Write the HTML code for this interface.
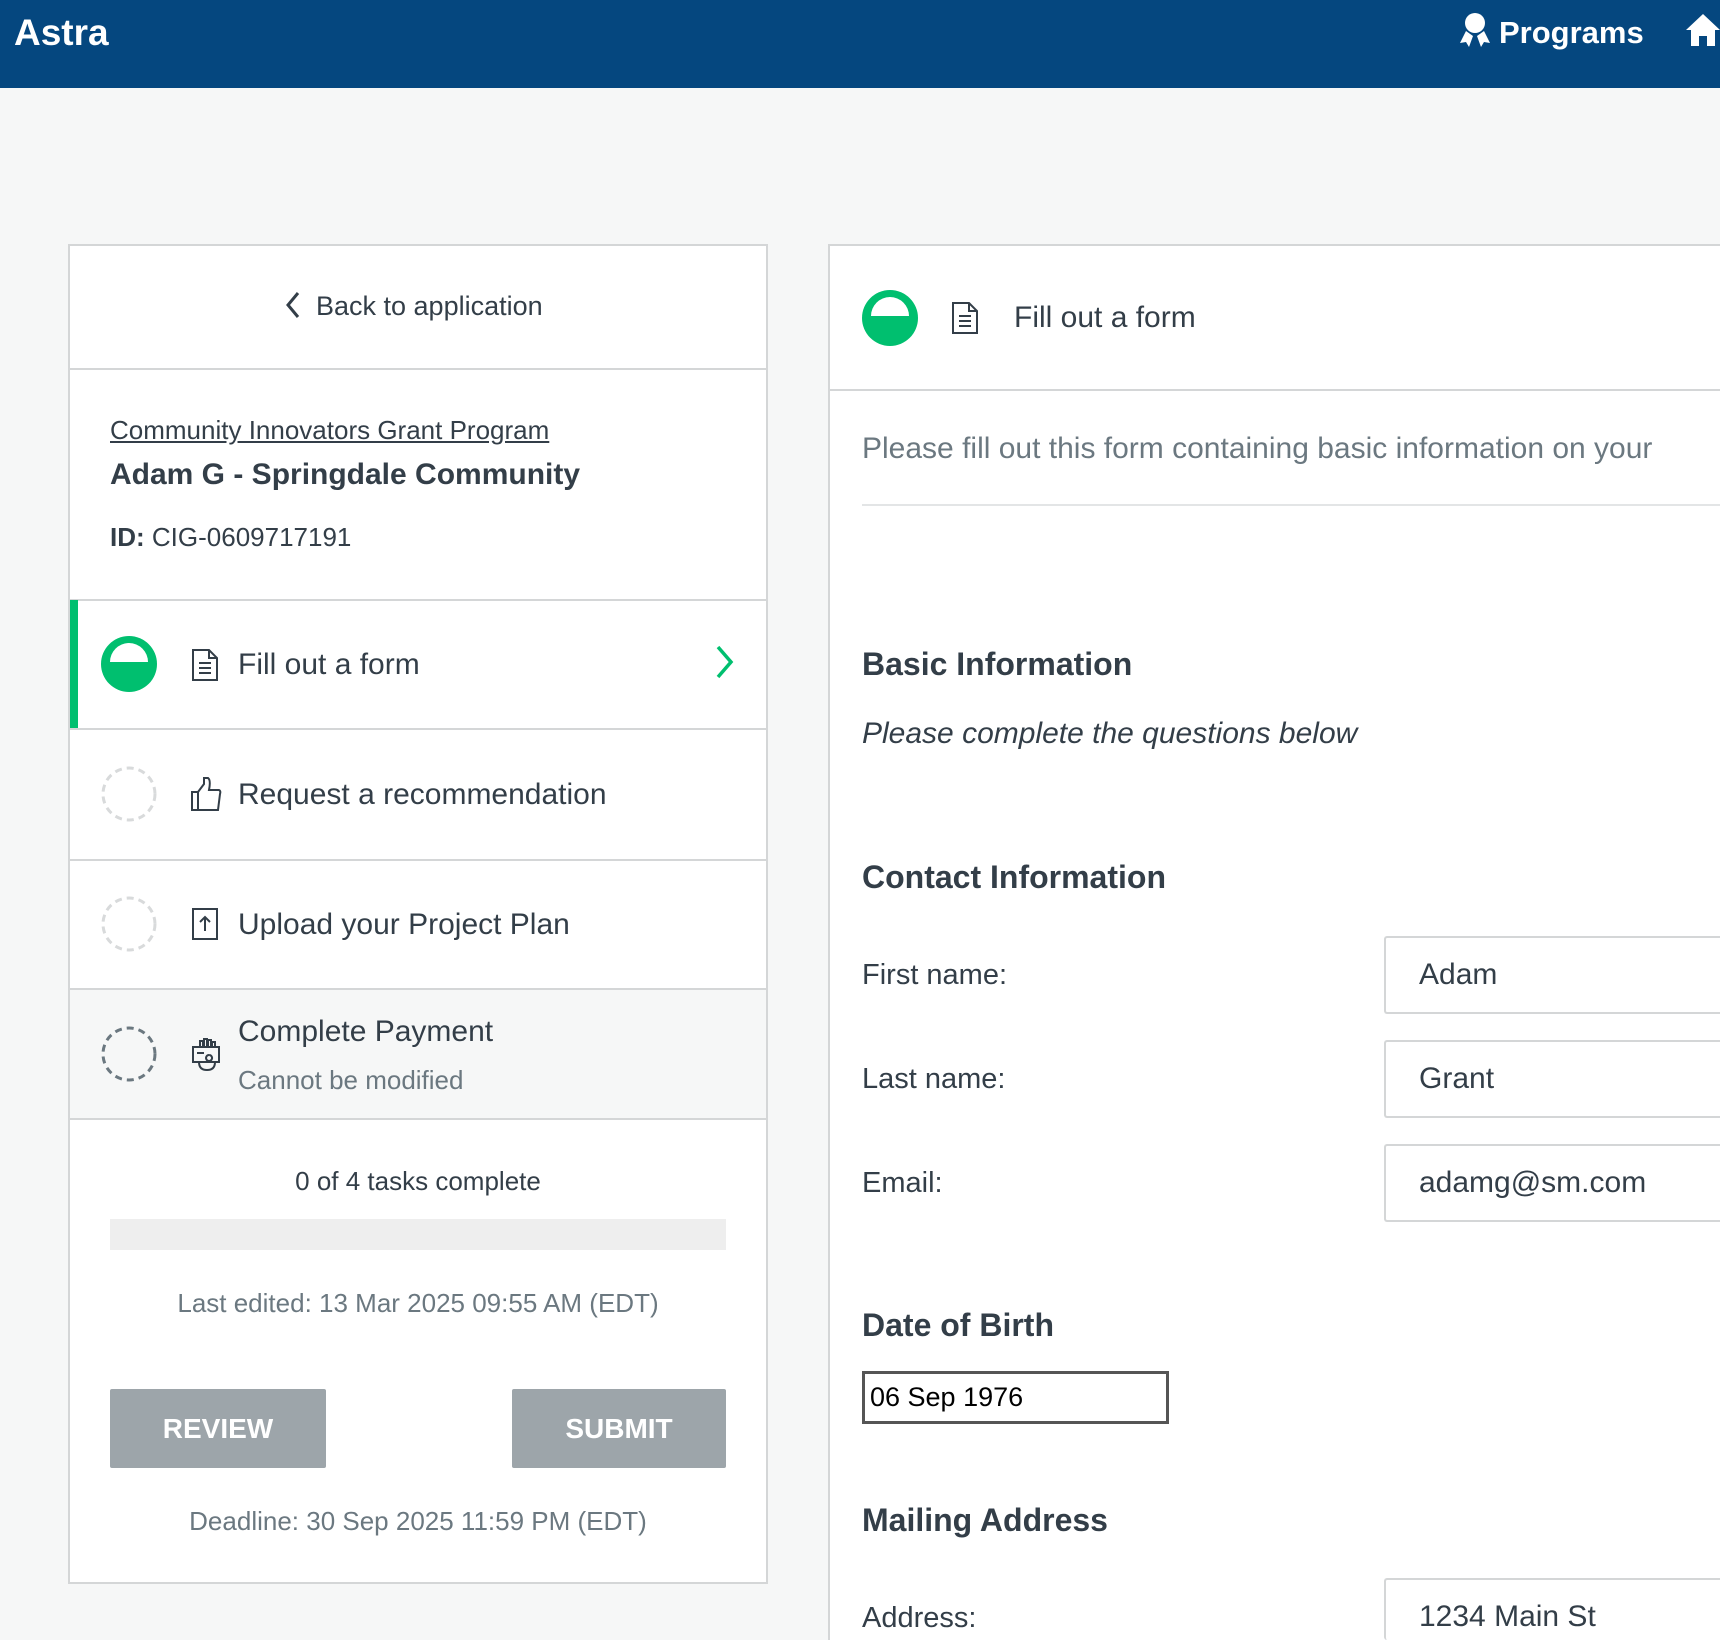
<!DOCTYPE html>
<html><head><meta charset="utf-8">
<style>
*{margin:0;padding:0;box-sizing:border-box}
html,body{width:1720px;height:1640px;overflow:hidden;background:#f6f7f7;font-family:"Liberation Sans",sans-serif;color:#333e48}
#w{position:relative;width:1720px;height:1640px;overflow:hidden}
.a{position:absolute;white-space:nowrap}
.hdr{position:absolute;left:0;top:0;width:1720px;height:88px;background:#05477f}
.panel{position:absolute;background:#fff;border:2px solid #d4d6d7}
.hl{position:absolute;height:2px;background:#d4d6d7}
.t{font-size:30px;line-height:36px}
.btn{position:absolute;background:#9da5aa;color:#fff;font-weight:bold;font-size:28px;text-align:center;line-height:79px;border-radius:2px}
.inp{position:absolute;left:1384px;width:340px;height:78px;border:2px solid #d4d6d7;border-right:none;border-radius:3px 0 0 3px;background:#fff;font-size:30px;line-height:74px;padding-left:33px;color:#333e48}
.lbl{font-size:29px;line-height:34px}
.h{font-size:32px;font-weight:bold;line-height:40px}
</style></head><body><div id="w">
<div class="hdr"></div>
<div class="a" style="left:14px;top:12px;font-size:37px;font-weight:bold;color:#fff;line-height:42px">Astra</div>
<svg class="a" style="left:1458px;top:12px" width="34" height="36" viewBox="0 0 34 36"><circle cx="17" cy="11" r="10" fill="#fff"/><path d="M8 19 L2 31 L8 30 L11 35 L15 24 Z M26 19 L32 31 L26 30 L23 35 L19 24 Z" fill="#fff"/></svg>
<div class="a" style="left:1499px;top:14px;font-size:31px;font-weight:bold;color:#fff;line-height:38px">Programs</div>
<svg class="a" style="left:1686px;top:12px" width="34" height="36" viewBox="0 0 34 36"><path d="M17 2 L34 18 L29 18 L29 34 L21 34 L21 24 L13 24 L13 34 L5 34 L5 18 L0 18 Z" fill="#fff"/></svg>

<div class="panel" style="left:68px;top:244px;width:700px;height:1340px"></div>
<svg class="a" style="left:284px;top:290px" width="18" height="30" viewBox="0 0 18 30"><path d="M14 3 L4 15 L14 27" fill="none" stroke="#333e48" stroke-width="3"/></svg>
<div class="a" style="left:316px;top:290px;font-size:27px;line-height:32px">Back to application</div>
<div class="hl" style="left:70px;top:368px;width:696px"></div>
<div class="a" style="left:110px;top:414px;font-size:26px;line-height:32px;text-decoration:underline">Community Innovators Grant Program</div>
<div class="a" style="left:110px;top:456px;font-size:30px;font-weight:bold;line-height:38px">Adam G - Springdale Community</div>
<div class="a" style="left:110px;top:521px;font-size:26px;line-height:32px"><b>ID:</b> CIG-0609717191</div>
<div class="hl" style="left:70px;top:599px;width:696px"></div>
<div class="a" style="left:70px;top:600px;width:8px;height:129px;background:#00bf6f"></div>
<svg class="a" style="left:101px;top:636px" width="56" height="56" viewBox="0 0 56 56"><circle cx="28" cy="28" r="28" fill="#00bf6f"/><path d="M9 26 A19 19 0 0 1 47 26 Z" fill="#fff"/></svg>
<svg class="a" style="left:191px;top:648px" width="28" height="34" viewBox="0 0 28 34"><path d="M2 2 H18 L26 10 V32 H2 Z M18 2 V10 H26 M8 15 H20 M8 20 H20 M8 25 H20" fill="none" stroke="#333e48" stroke-width="2"/></svg>
<div class="a t" style="left:238px;top:647px">Fill out a form</div>
<svg class="a" style="left:714px;top:644px" width="22" height="36" viewBox="0 0 22 36"><path d="M4 3 L17 18 L4 33" fill="none" stroke="#00bf6f" stroke-width="3.5"/></svg>
<div class="hl" style="left:70px;top:728px;width:696px"></div>
<svg class="a" style="left:101px;top:766px" width="56" height="56" viewBox="0 0 56 56"><circle cx="28" cy="28" r="26" fill="none" stroke="#d8dadb" stroke-width="3" stroke-dasharray="7 5"/></svg>
<svg class="a" style="left:190px;top:776px" width="32" height="36" viewBox="0 0 32 36"><path d="M2 16 H8 V34 H2 Z M8 16 L14 8 V2 H18 Q21 4 19 14 H29 Q31 15 30 18 L28 34 H8" fill="none" stroke="#333e48" stroke-width="2"/></svg>
<div class="a t" style="left:238px;top:777px">Request a recommendation</div>
<div class="hl" style="left:70px;top:859px;width:696px"></div>
<svg class="a" style="left:101px;top:896px" width="56" height="56" viewBox="0 0 56 56"><circle cx="28" cy="28" r="26" fill="none" stroke="#d8dadb" stroke-width="3" stroke-dasharray="7 5"/></svg>
<svg class="a" style="left:191px;top:907px" width="28" height="34" viewBox="0 0 28 34"><path d="M2 2 H26 V32 H2 Z M14 24 V10 M9 15 L14 10 L19 15" fill="none" stroke="#333e48" stroke-width="2"/></svg>
<div class="a t" style="left:238px;top:907px">Upload your Project Plan</div>
<div class="hl" style="left:70px;top:988px;width:696px"></div>
<div class="a" style="left:70px;top:990px;width:696px;height:128px;background:#f6f7f7"></div>
<svg class="a" style="left:101px;top:1026px" width="56" height="56" viewBox="0 0 56 56"><circle cx="28" cy="28" r="26" fill="none" stroke="#6b7880" stroke-width="3" stroke-dasharray="7 5"/></svg>
<svg class="a" style="left:190px;top:1036px" width="32" height="36" viewBox="0 0 32 36"><path d="M3 11 H29 V26 H3 Z M7 17 H14 M19 19 a3 3 0 1 0 0.1 0 M10 11 V5 H13 V11 M14 11 V3 H17 V11 M18 11 V4 H21 V11 M22 11 V6 H25 V11 M9 26 Q9 34 17 34 Q25 34 25 26" fill="none" stroke="#333e48" stroke-width="2"/></svg>
<div class="a t" style="left:238px;top:1014px">Complete Payment</div>
<div class="a" style="left:238px;top:1064px;font-size:26px;line-height:32px;color:#6b7880">Cannot be modified</div>
<div class="hl" style="left:70px;top:1118px;width:696px"></div>
<div class="a" style="left:70px;top:1165px;width:696px;text-align:center;font-size:26px;line-height:32px">0 of 4 tasks complete</div>
<div class="a" style="left:110px;top:1219px;width:616px;height:31px;background:#eeeeee"></div>
<div class="a" style="left:70px;top:1287px;width:696px;text-align:center;font-size:26px;line-height:32px;color:#6b7880">Last edited: 13 Mar 2025 09:55 AM (EDT)</div>
<div class="btn" style="left:110px;top:1389px;width:216px;height:79px">REVIEW</div>
<div class="btn" style="left:512px;top:1389px;width:214px;height:79px">SUBMIT</div>
<div class="a" style="left:70px;top:1505px;width:696px;text-align:center;font-size:26px;line-height:32px;color:#6b7880">Deadline: 30 Sep 2025 11:59 PM (EDT)</div>

<div class="panel" style="left:828px;top:244px;width:892px;height:1396px;border-right:none;border-bottom:none"></div>
<svg class="a" style="left:862px;top:290px" width="56" height="56" viewBox="0 0 56 56"><circle cx="28" cy="28" r="28" fill="#00bf6f"/><path d="M9 26 A19 19 0 0 1 47 26 Z" fill="#fff"/></svg>
<svg class="a" style="left:951px;top:301px" width="28" height="34" viewBox="0 0 28 34"><path d="M2 2 H18 L26 10 V32 H2 Z M18 2 V10 H26 M8 15 H20 M8 20 H20 M8 25 H20" fill="none" stroke="#333e48" stroke-width="2"/></svg>
<div class="a t" style="left:1014px;top:300px">Fill out a form</div>
<div class="hl" style="left:830px;top:389px;width:890px"></div>
<div class="a" style="left:862px;top:431px;font-size:30px;line-height:36px;color:#6b7880">Please fill out this form containing basic information on your</div>
<div class="hl" style="left:862px;top:504px;width:858px;background:#e3e5e6"></div>
<div class="a h" style="left:862px;top:644px">Basic Information</div>
<div class="a" style="left:862px;top:716px;font-size:30px;line-height:36px;font-style:italic">Please complete the questions below</div>
<div class="a h" style="left:862px;top:857px">Contact Information</div>
<div class="a lbl" style="left:862px;top:958px">First name:</div>
<div class="inp" style="top:936px">Adam</div>
<div class="a lbl" style="left:862px;top:1062px">Last name:</div>
<div class="inp" style="top:1040px">Grant</div>
<div class="a lbl" style="left:862px;top:1166px">Email:</div>
<div class="inp" style="top:1144px">adamg@sm.com</div>
<div class="a h" style="left:862px;top:1305px">Date of Birth</div>
<div class="a" style="left:862px;top:1371px;width:307px;height:53px;border:3px solid #555;background:#fff;font-size:27px;line-height:47px;padding-left:5px;color:#000">06 Sep 1976</div>
<div class="a h" style="left:862px;top:1500px">Mailing Address</div>
<div class="a lbl" style="left:862px;top:1601px">Address:</div>
<div class="inp" style="top:1578px;height:62px;border-bottom:none">1234 Main St</div>
</div></body></html>
